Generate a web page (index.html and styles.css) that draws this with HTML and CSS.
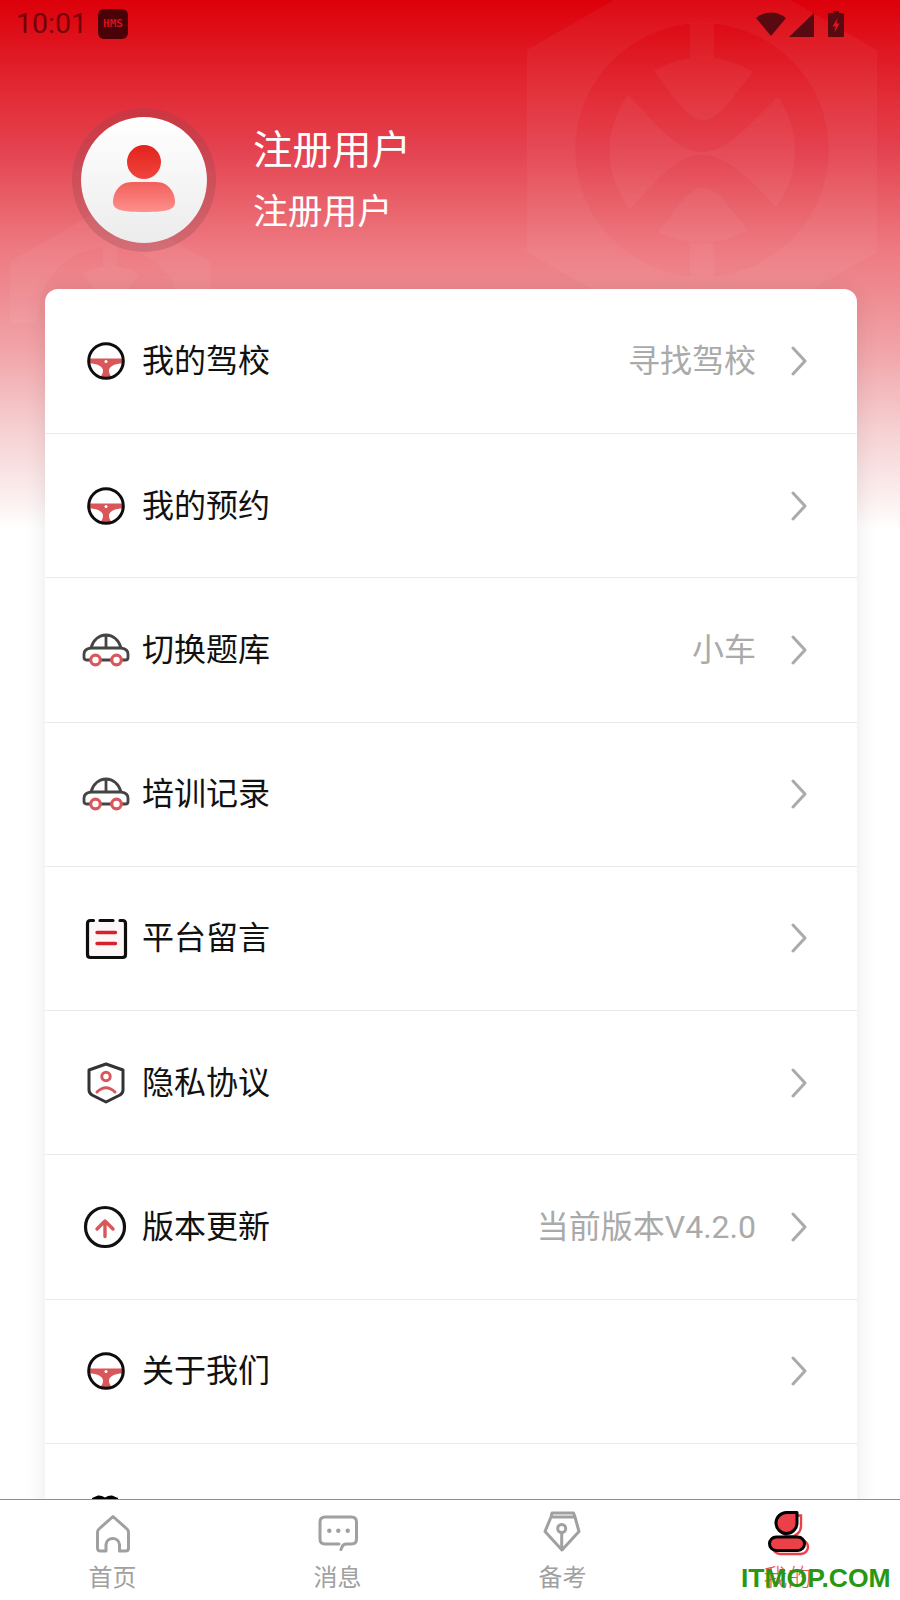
FILE: index.html
```html
<!DOCTYPE html>
<html lang="zh-CN">
<head>
<meta charset="utf-8">
<title>我的</title>
<link rel="stylesheet" href="styles.css">
</head>
<body>
<div class="app">
  <main class="main">
    <svg class="wm wm-big" viewBox="0 0 350 404" aria-hidden="true">
      <defs>
        <g id="mark">
          <path fill-rule="evenodd" d="M175 0L350 101V303L175 404L0 303V101Z M175 74.3A126.7 126.7 0 1 0 175 327.7A126.7 126.7 0 1 0 175 74.3Z"/>
          <rect x="163" y="74" width="24" height="35"/>
          <rect x="163" y="294" width="24" height="34"/>
          <path d="M127 122A93 93 0 0 1 226 123C205 148 192 171 176 171C160 171 147 148 127 122Z"/>
          <path d="M101 146C128 172 148 203 175 203C202 203 224 172 251 148A93 93 0 0 1 249 258C224 232 202 206 175 206C148 206 128 234 103 260A93 93 0 0 1 101 146Z"/>
          <path d="M131 283C150 260 160 239 176 239C192 239 202 260 221 281A93 93 0 0 1 131 283Z"/>
        </g>
        <g id="wheel">
          <path class="red-fill" d="M7.500 21.500H40.500V26.500C33 26.500 28 29 27 33C26.800 36 28 38 30 40.500H18C20 38 21.200 36 21 33C20 29 15 26.500 7.500 26.500Z"/>
          <circle class="white-fill" cx="24" cy="24.600" r="1.500"/>
          <circle class="rim" cx="24" cy="24" r="17.300"/>
        </g>
        <g id="car">
          <path class="car-line" d="M8 34H4.500Q2 34 2 31.500V28Q2 23 9 22C11 14 17 9 24 9S37 14 39 22Q46 23 46 28V31.500Q46 34 43.500 34H40M19 34H29M9 22H39M24 9V22"/>
          <circle class="car-wheel" cx="13.500" cy="34" r="4.800"/>
          <circle class="car-wheel" cx="34.500" cy="34" r="4.800"/>
        </g>
      </defs>
      <use href="#mark"/>
    </svg>
    <svg class="wm wm-small" viewBox="0 0 350 208" aria-hidden="true"><use href="#mark"/></svg>

    <div class="content">
      <header class="status">
        <span class="time">10:01</span>
        <span class="hms">HMS</span>
        <span class="status-fill"></span>
        <svg class="st-wifi" viewBox="0 0 30 25"><path d="M15 24L0 6Q7 0.500 15 0.500T30 6Z"/></svg>
        <svg class="st-signal" viewBox="0 0 25 24"><path d="M0 24L25 0V24Z"/></svg>
        <svg class="st-batt" viewBox="0 0 16 26"><path d="M5 0H11V2H15Q16 2 16 3V25Q16 26 15 26H1Q0 26 0 25V3Q0 2 1 2H5Z"/><path class="bolt" d="M9.500 7L4.500 15.500H7.500L6.500 21.500L11.500 12.500H8.500Z"/></svg>
      </header>

      <section class="profile">
        <div class="avatar">
          <svg class="avatar-art" viewBox="0 0 126 126">
            <defs>
              <linearGradient id="head" x1="0" y1="0" x2="0" y2="1"><stop offset="0" stop-color="#e2231c"/><stop offset="1" stop-color="#f0443e"/></linearGradient>
              <linearGradient id="body" x1="0" y1="0" x2="0" y2="1"><stop offset="0" stop-color="#f0605c"/><stop offset="1" stop-color="#ff8f8c"/></linearGradient>
            </defs>
            <circle cx="63" cy="45" r="17" fill="url(#head)"/>
            <path fill="url(#body)" d="M51 65H75C88 65 94 76 94 85C94 92 88 95 63 95C38 95 32 92 32 85C32 76 38 65 51 65Z"/>
          </svg>
        </div>
        <div class="who">
          <div class="who-name">注册用户</div>
          <div class="who-sub">注册用户</div>
        </div>
      </section>

      <section class="card">
        <div class="row">
          <svg class="row-icon" viewBox="0 0 48 48"><use href="#wheel"/></svg>
          <span class="row-title">我的驾校</span>
          <span class="row-value">寻找驾校</span>
          <svg class="chev" viewBox="0 0 16 30"><path d="M2 2L14 15L2 28"/></svg>
        </div>
        <div class="row">
          <svg class="row-icon" viewBox="0 0 48 48"><use href="#wheel"/></svg>
          <span class="row-title">我的预约</span>
          <svg class="chev" viewBox="0 0 16 30"><path d="M2 2L14 15L2 28"/></svg>
        </div>
        <div class="row">
          <svg class="row-icon" viewBox="0 0 48 48"><use href="#car"/></svg>
          <span class="row-title">切换题库</span>
          <span class="row-value">小车</span>
          <svg class="chev" viewBox="0 0 16 30"><path d="M2 2L14 15L2 28"/></svg>
        </div>
        <div class="row">
          <svg class="row-icon" viewBox="0 0 48 48"><use href="#car"/></svg>
          <span class="row-title">培训记录</span>
          <svg class="chev" viewBox="0 0 16 30"><path d="M2 2L14 15L2 28"/></svg>
        </div>
        <div class="row">
          <svg class="row-icon" viewBox="0 0 48 48">
            <path class="clip-bg" d="M8 7H41Q43 7 43 9V41Q43 43 41 43H8Q6 43 6 41V9Q6 7 8 7Z"/>
            <path class="clip-line" d="M11.500 6.500H8.500Q5.500 6.500 5.500 9.500V40.500Q5.500 43.500 8.500 43.500H40.500Q43.500 43.500 43.500 40.500V9.500Q43.500 6.500 40.500 6.500H38M18 6.500H31"/>
            <path class="clip-red" d="M15 18.500H33.500M15 29.500H33.500"/>
          </svg>
          <span class="row-title">平台留言</span>
          <svg class="chev" viewBox="0 0 16 30"><path d="M2 2L14 15L2 28"/></svg>
        </div>
        <div class="row">
          <svg class="row-icon" viewBox="0 0 48 48">
            <path class="shield" d="M24 5L41 11V31Q41 34 38 36L24 43L10 36Q7 34 7 31V11Z"/>
            <circle class="shield-red" cx="24" cy="17.500" r="4.200"/>
            <path class="shield-red" d="M15 33Q24 24.500 33 33"/>
          </svg>
          <span class="row-title">隐私协议</span>
          <svg class="chev" viewBox="0 0 16 30"><path d="M2 2L14 15L2 28"/></svg>
        </div>
        <div class="row">
          <svg class="row-icon" viewBox="0 0 48 48">
            <circle class="up-ring" cx="23" cy="24" r="19.500"/>
            <path class="up-arrow" d="M23 33.500V18M15 26L23 18L31 26"/>
          </svg>
          <span class="row-title">版本更新</span>
          <span class="row-value">当前版本V4.2.0</span>
          <svg class="chev" viewBox="0 0 16 30"><path d="M2 2L14 15L2 28"/></svg>
        </div>
        <div class="row">
          <svg class="row-icon" viewBox="0 0 48 48"><use href="#wheel"/></svg>
          <span class="row-title">关于我们</span>
          <svg class="chev" viewBox="0 0 16 30"><path d="M2 2L14 15L2 28"/></svg>
        </div>
        <div class="row">
          <svg class="row-icon" viewBox="0 0 48 48"><path d="M10 7L16 4.500Q19.500 4.200 23 6.500Q26.500 4.200 30 4.500L36 7V20H10Z"/></svg>
        </div>
      </section>
    </div>
  </main>

  <nav class="tabs">
    <div class="tab">
      <svg class="tab-icon" viewBox="0 0 48 48"><path d="M24 7.500L38 20Q39.500 21.500 39.500 23V39Q39.500 42 36.500 42H30.500V35.500A6.800 6.800 0 0 0 17 35.500V42H11.500Q8.500 42 8.500 39V23Q8.500 21.500 10 20Z"/></svg>
      <span class="tab-label">首页</span>
    </div>
    <div class="tab">
      <svg class="tab-icon" viewBox="0 0 48 48">
        <path d="M25 35H11Q6 35 6 30V13Q6 8 11 8H37.500Q42.500 8 42.500 13V30Q42.500 35 37.500 35H32.500Q29 35 28 38L27 40.500"/>
        <circle class="tab-dot" cx="15.300" cy="21.700" r="2.200"/>
        <circle class="tab-dot" cx="24.300" cy="21.700" r="2.200"/>
        <circle class="tab-dot" cx="33.700" cy="21.700" r="2.200"/>
      </svg>
      <span class="tab-label">消息</span>
    </div>
    <div class="tab">
      <svg class="tab-icon tab-icon-pen" viewBox="0 0 48 48">
        <path d="M13 8L14 4H35.500L37 8ZM13 8L7 22.500L24 41L41 22.500L37 8"/>
        <circle cx="23.700" cy="19.500" r="4"/>
        <path d="M23.700 23.500V40"/>
      </svg>
      <span class="tab-label">备考</span>
    </div>
    <div class="tab">
      <svg class="tab-me" viewBox="0 0 48 48">
        <path class="me-shadow" d="M37 6.500V17A10.500 10.500 0 1 1 26.500 6.500Z"/>
        <rect class="me-shadow" x="9" y="31" width="35" height="14" rx="7"/>
        <path class="me-fill" d="M33 4.500V14A10.500 10.500 0 1 1 22.500 3.500L33 4Z"/>
        <rect class="me-fill" x="5.500" y="28" width="35" height="13.500" rx="6.700"/>
        <path class="me-line" d="M33 4V14A10.500 10.500 0 1 1 22.500 3.500H33Z"/>
        <rect class="me-line" x="5.500" y="28" width="35" height="13.500" rx="6.700"/>
      </svg>
      <span class="tab-label tab-label-on">我的</span>
    </div>
    <span class="stamp">ITMOP.COM</span>
  </nav>
</div>
</body>
</html>
```
FILE: styles.css
```css
* { box-sizing: border-box; }
html, body { margin: 0; padding: 0; }
body { font-family: "Roboto", "Noto Sans CJK SC", sans-serif; background: #fff; }

.app { width: 900px; height: 1600px; display: flex; flex-direction: column; overflow: hidden; }

.main {
  position: relative;
  flex: 1;
  min-height: 0;
  overflow: hidden;
  background: linear-gradient(180deg, #dc000a 0, #e22e38 100px, #e44250 150px, #e85f68 200px, #ee7a82 250px, #ee8a90 290px, #f1a4a8 350px, #f6d0d2 430px, #fbf0f0 500px, #ffffff 530px) no-repeat;
  background-size: 100% 530px;
}

.wm { position: absolute; fill: #fff; fill-opacity: .045; }
.wm-big { left: 527px; top: -51px; width: 350px; height: 404px; }
.wm-small { left: 10px; top: 204px; width: 200px; height: 119px; }

.content { position: relative; z-index: 1; }

.status { height: 48px; display: flex; align-items: center; padding: 0 56px 0 16px; color: #6e0209; }
.time { font: 400 28.500px/48px "Roboto", sans-serif; width: 82px; opacity: .95; }
.hms {
  width: 30px; height: 30px; border-radius: 6px; background: #4a0208; color: #d8101c;
  font: 700 11px/30px "DejaVu Sans Mono", monospace; text-align: center;
}
.status-fill { flex: 1; }
.status svg { fill: #590a10; display: block; }
.st-wifi { width: 30px; height: 25px; margin-right: 3px; }
.st-signal { width: 25px; height: 24px; margin-right: 14px; margin-top: 1px; }
.st-batt { width: 16px; height: 26px; }
.status .bolt { fill: #e0141e; }

.profile { display: flex; align-items: center; height: 144px; margin: 60px 0 37px 72px; gap: 37px; }
.avatar {
  width: 144px; height: 144px; border-radius: 50%;
  border: 9px solid rgba(140, 70, 80, .28);
  background: linear-gradient(180deg, #ffffff, #ececec) padding-box;
  display: flex;
}
.avatar-art { width: 126px; height: 126px; display: block; }
.who { color: #fff; display: flex; flex-direction: column; margin-top: 0; }
.who-name { font-size: 39.500px; line-height: 48px; }
.who-sub { font-size: 34.800px; line-height: 44px; margin-top: 15px; }

.card {
  width: 812px; margin-left: 45px; background: #fff; border-radius: 13px 13px 0 0;
  box-shadow: 0 0 22px rgba(0, 0, 0, .09);
}
.row {
  height: 144.220px; display: flex; align-items: center; padding: 0 50px 0 37px;
  border-top: 1px solid #ebebeb;
}
.row:first-child { border-top: 0; }
.row-icon { width: 48px; height: 48px; flex: none; display: block; }
.row-title { margin-left: 12px; flex: 1; font-size: 32px; line-height: 44px; color: #111; }
.row-value { font-size: 32px; line-height: 44px; color: #aaa; margin-right: 35px; }
.chev { width: 16px; height: 30px; flex: none; fill: none; stroke: #aaa; stroke-width: 3; stroke-linecap: round; stroke-linejoin: round; }

.red-fill { fill: #d9575b; }
.white-fill { fill: #fff; }
.rim { fill: none; stroke: #0d0d0d; stroke-width: 3; }
.car-line { fill: none; stroke: #444; stroke-width: 2.800; stroke-linejoin: round; }
.car-wheel { fill: #fff; stroke: #d9575b; stroke-width: 3.200; }
.clip-bg { fill: #fdf6f6; }
.clip-line { fill: none; stroke: #0d0d0d; stroke-width: 3.200; stroke-linecap: round; }
.clip-red { fill: none; stroke: #d6202c; stroke-width: 3.400; stroke-linecap: round; }
.shield { fill: none; stroke: #333; stroke-width: 3; stroke-linejoin: round; }
.shield-red { fill: none; stroke: #d9575b; stroke-width: 3; stroke-linecap: round; }
.up-ring { fill: none; stroke: #111; stroke-width: 3.200; }
.up-arrow { fill: none; stroke: #d9575b; stroke-width: 3.400; stroke-linecap: round; stroke-linejoin: round; }

.tabs {
  position: relative; z-index: 2; height: 101px; flex: none; background: #fff;
  border-top: 1px solid #8e8e8e; display: grid; grid-template-columns: repeat(4, 225px);
}
.tab { display: flex; flex-direction: column; align-items: center; padding-top: 9px; }
.tab-icon { width: 48px; height: 48px; display: block; fill: none; stroke: #a0a0a0; stroke-width: 3; stroke-linejoin: round; stroke-linecap: round; }
.tab-icon .tab-dot { fill: #a0a0a0; stroke: none; }
.tab-icon-pen { margin-right: 2px; }
.tab-me { width: 48px; height: 48px; display: block; }
.me-shadow { fill: none; stroke: #ec4048; stroke-width: 2.400; }
.me-fill { fill: #ec4048; stroke: none; }
.me-line { fill: none; stroke: #000; stroke-width: 3; stroke-linejoin: round; }
.tab-label { font-size: 24px; line-height: 34px; margin-top: 4px; color: #a0a0a0; }
.tab-label-on { color: #ec5058; font-weight: 300; }
.stamp {
  position: absolute; left: 741px; top: 61px;
  font: 700 26.500px/34px "Liberation Sans", sans-serif; color: #27980f; white-space: nowrap;
}
```
